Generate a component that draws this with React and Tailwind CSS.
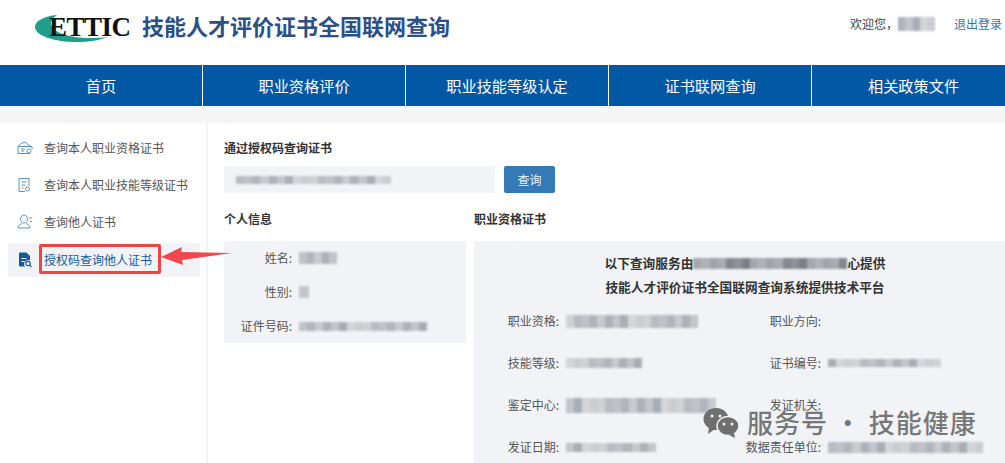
const shades = ["#c3c5ca", "#b2b5bb", "#cfd1d5", "#a9adb4", "#c8cacf", "#b9bcc2", "#d3d5d9", "#aeb2b8", "#bfc2c7", "#cbcdd1"];
const darkShades = ["#a6a8ae", "#85878e", "#b0b2b8", "#8f9198", "#a0a3a9", "#7d7f86", "#aaacb2"];

const Blur = ({ w, h = 12, dark = false }) => {
  const n = Math.max(1, Math.round(w / 8));
  return (
    <span className="flex shrink-0 blur-[1px] overflow-hidden" style={{ width: w, height: h }}>
      {Array.from({ length: n }).map((_, i) => (
        <span
          key={i}
          className="flex-1 h-full"
          style={{ backgroundColor: dark ? darkShades[(i * 2) % darkShades.length] : shades[(i * 3 + w) % shades.length] }}
        />
      ))}
    </span>
  );
};

const nav = ["首页", "职业资格评价", "职业技能等级认定", "证书联网查询", "相关政策文件"];

const I1 = () => (
  <svg width="16" height="14" viewBox="0 0 16 14" fill="none" stroke="#5b93ba" strokeWidth="1">
    <path d="M1 5.500V12.500H13M15 8V5.500H1L4 2.500L8 1L11 3.500L14 5.500" />
    <path d="M4 8H8M4 10H7" />
    <circle cx="12" cy="10" r="2" />
  </svg>
);
const I2 = () => (
  <svg width="14" height="16" viewBox="0 0 14 16" fill="none" stroke="#5b93ba" strokeWidth="1">
    <path d="M8 14.500H2V1.500H12V9" />
    <path d="M4.500 5H9.500M4.500 8H8M4.500 11H6.500" />
    <circle cx="10.500" cy="12" r="2" />
  </svg>
);
const I3 = () => (
  <svg width="16" height="15" viewBox="0 0 16 15" fill="none" stroke="#5b93ba" strokeWidth="1">
    <path d="M7 9C4.800 9 3.600 7 3.600 4.800C3.600 2.600 5 1 7 1C9 1 10.400 2.600 10.400 4.800C10.400 7 9.200 9 7 9Z" />
    <path d="M1 14C1 11.500 3 10.500 5 9.500M9 9.500C11 10.500 13 11.500 13 14H1" />
    <path d="M12.500 4H15M13 7.500H15" />
  </svg>
);
const I4 = () => (
  <svg width="14" height="16" viewBox="0 0 14 16">
    <path d="M1 1.500C1 1 1.400 0.500 2 0.500H8.500L12 4V8.500A4 4 0 0 0 7 14.500H2C1.400 14.500 1 14 1 13.500Z" fill="#165a9c" />
    <path d="M3.500 6.500H8.500M3.500 9.500H6.500" stroke="#ffffff" strokeWidth="1.200" />
    <circle cx="10" cy="11.500" r="2.200" fill="none" stroke="#165a9c" strokeWidth="1.200" />
    <path d="M11.600 13.200L13.400 15" stroke="#165a9c" strokeWidth="1.200" />
  </svg>
);

const side = [
  [<I1 />, "查询本人职业资格证书"],
  [<I2 />, "查询本人职业技能等级证书"],
  [<I3 />, "查询他人证书"],
];

const Field = ({ label, w, labelW = "w-[85px]", h = 12 }) => (
  <div className="flex items-center">
    <span className={`${labelW} shrink-0 text-right whitespace-nowrap`}>{label}:</span>
    {w ? (
      <span className="ml-[7px]">
        <Blur w={w} h={h} />
      </span>
    ) : null}
  </div>
);

export default function App() {
  return (
    <div
      className="relative w-[1005px] h-[463px] overflow-hidden bg-white text-[12px] text-[#4a4a4a]"
      style={{ fontFamily: '"Noto Sans CJK SC", "Liberation Sans", sans-serif' }}
    >
      <header className="h-[65px] flex items-start justify-between">
        <div className="flex items-center pl-[34px] pt-[10px]">
          <div className="relative w-[98px] h-[30px]">
            <svg width="98" height="30" viewBox="0 0 98 30" className="absolute left-0 top-0">
              <path
                d="M23 2C10 3 1 8 1 14C1 23 22 29 42 29C55 29 66 27 74 24C60 25.500 40 26 26 20C15 15 14 8 23 2Z"
                fill="#1f9e8c"
              />
            </svg>
            <span
              className="absolute left-[15px] top-[-1px] text-[27px] leading-[30px] font-bold text-[#111] tracking-[-0.5px]"
              style={{ fontFamily: '"Liberation Serif", serif' }}
            >
              ETTIC
            </span>
          </div>
          <h1 className="ml-[10px] mb-[5px] text-[22px] leading-[30px] font-bold text-[#2b4f86] whitespace-nowrap">
            技能人才评价证书全国联网查询
          </h1>
        </div>
        <div className="flex items-center pt-[15px] pr-[3px] text-[12px] leading-[18px]">
          <span className="text-[#444]">欢迎您，</span>
          <Blur w={37} h={14} />
          <span className="ml-[19px] text-[#3b73ab]">退出登录</span>
        </div>
      </header>

      <nav className="h-[41px] flex overflow-hidden bg-[#0358a6] text-white text-[15.2px]">
        {nav.map((n, i) => (
          <div
            key={n}
            className={
              i < 4
                ? "w-[203px] shrink-0 flex items-center justify-center border-r border-white"
                : "w-[203px] shrink-0 flex items-center justify-center"
            }
          >
            {n}
          </div>
        ))}
      </nav>
      <div className="h-[17px] bg-[#f5f5f5]" />

      <div className="flex">
        <aside className="w-[208px] h-[340px] shrink-0 border-r-[2px] border-[#f3f4f6] pl-[8px] pr-[6px] pt-[6px]">
          {side.map(([icon, t]) => (
            <div key={t} className="h-[37px] flex items-center">
              <span className="w-[36px] pl-[9px] flex justify-start">{icon}</span>
              <span className="text-[#555]">{t}</span>
            </div>
          ))}
          <div className="mt-[3px] h-[34px] flex items-center bg-[#f1f3f6] text-[#165a9c] rounded-[2px]">
            <span className="w-[36px] pl-[10px] flex justify-start"><I4 /></span>
            <span>授权码查询他人证书</span>
          </div>
        </aside>

        <main className="flex-1 min-w-0 pl-[16px] pt-[16px]">
          <h2 className="font-bold text-[#333] leading-[17px]">通过授权码查询证书</h2>
          <div className="mt-[10px] flex gap-[9px]">
            <div className="w-[271px] h-[27px] bg-[#f1f3f6] flex items-center pl-[12px]">
              <Blur w={155} h={8} />
            </div>
            <button className="w-[51px] h-[27px] bg-[#337ab7] text-[#eef4f9] rounded-[2px]">查询</button>
          </div>

          <div className="mt-[17px] flex gap-[8px]">
            <section className="w-[242px] shrink-0">
              <h3 className="font-bold text-[#333] leading-[17px]">个人信息</h3>
              <div className="mt-[14px] h-[102px] bg-[#f1f3f6] pt-[8px] flex flex-col gap-[16px] leading-[18px] text-[#555]">
                <Field label="姓名" labelW="w-[68px]" w={38} />
                <Field label="性别" labelW="w-[68px]" w={10} />
                <Field label="证件号码" labelW="w-[68px]" w={128} h={9} />
              </div>
            </section>

            <section className="flex-1 min-w-0">
              <h3 className="font-bold text-[#333] leading-[17px]">职业资格证书</h3>
              <div className="mt-[14px] h-[222px] bg-[#f1f3f6] text-[#555]">
                <div className="pt-[13px] pl-[11px] flex flex-col items-center gap-[6px] font-bold text-[#333] text-[12.7px] leading-[18px]">
                  <div className="flex items-center">
                    以下查询服务由<Blur w={154} h={11} dark />心提供
                  </div>
                  <div>技能人才评价证书全国联网查询系统提供技术平台</div>
                </div>
                <div className="mt-[16px] grid grid-cols-[250px_1fr] gap-y-[24px] leading-[18px]">
                  <Field label="职业资格" w={132} h={13} />
                  <Field label="职业方向" labelW="w-[97px]" />
                  <Field label="技能等级" w={76} h={10} />
                  <Field label="证书编号" labelW="w-[97px]" w={113} h={8} />
                  <Field label="鉴定中心" w={150} h={15} />
                  <Field label="发证机关" labelW="w-[97px]" />
                  <Field label="发证日期" w={90} h={9} />
                  <Field label="数据责任单位" labelW="w-[97px]" w={155} h={11} />
                </div>
              </div>
            </section>
          </div>
        </main>
      </div>

      {/* red annotation over the active menu row */}
      <div className="absolute left-[39px] top-[244px] w-[122px] h-[30px] border-[3px] border-[#ee4444] rounded-[2px]" />
      <svg className="absolute left-[160px] top-[245px]" width="74" height="24" viewBox="0 0 74 24">
        <path d="M1 12L22 2L21 7L72 8L22 15L23 20Z" fill="#f0484c" />
      </svg>

      {/* watermark */}
      <div className="absolute left-[701px] top-[406px] flex items-center text-[#777777]">
        <svg width="40" height="32" viewBox="0 0 40 32">
          <ellipse cx="15" cy="13" rx="12.500" ry="11" fill="#6f6f6f" />
          <path d="M8 21L7 28L14 23Z" fill="#6f6f6f" />
          <ellipse cx="27" cy="20" rx="11" ry="9.500" fill="#6f6f6f" stroke="#f1f3f6" strokeWidth="1.500" />
          <path d="M33 27L34 32L28 29Z" fill="#6f6f6f" />
          <circle cx="11" cy="10" r="1.600" fill="#f1f3f6" />
          <circle cx="19" cy="10" r="1.600" fill="#f1f3f6" />
          <circle cx="23" cy="18" r="1.500" fill="#f1f3f6" />
          <circle cx="31" cy="18" r="1.500" fill="#f1f3f6" />
        </svg>
        <span className="ml-[6px] text-[26px] leading-[32px] tracking-[1px] font-medium whitespace-nowrap">
          服务号 · 技能健康
        </span>
      </div>
    </div>
  );
}
